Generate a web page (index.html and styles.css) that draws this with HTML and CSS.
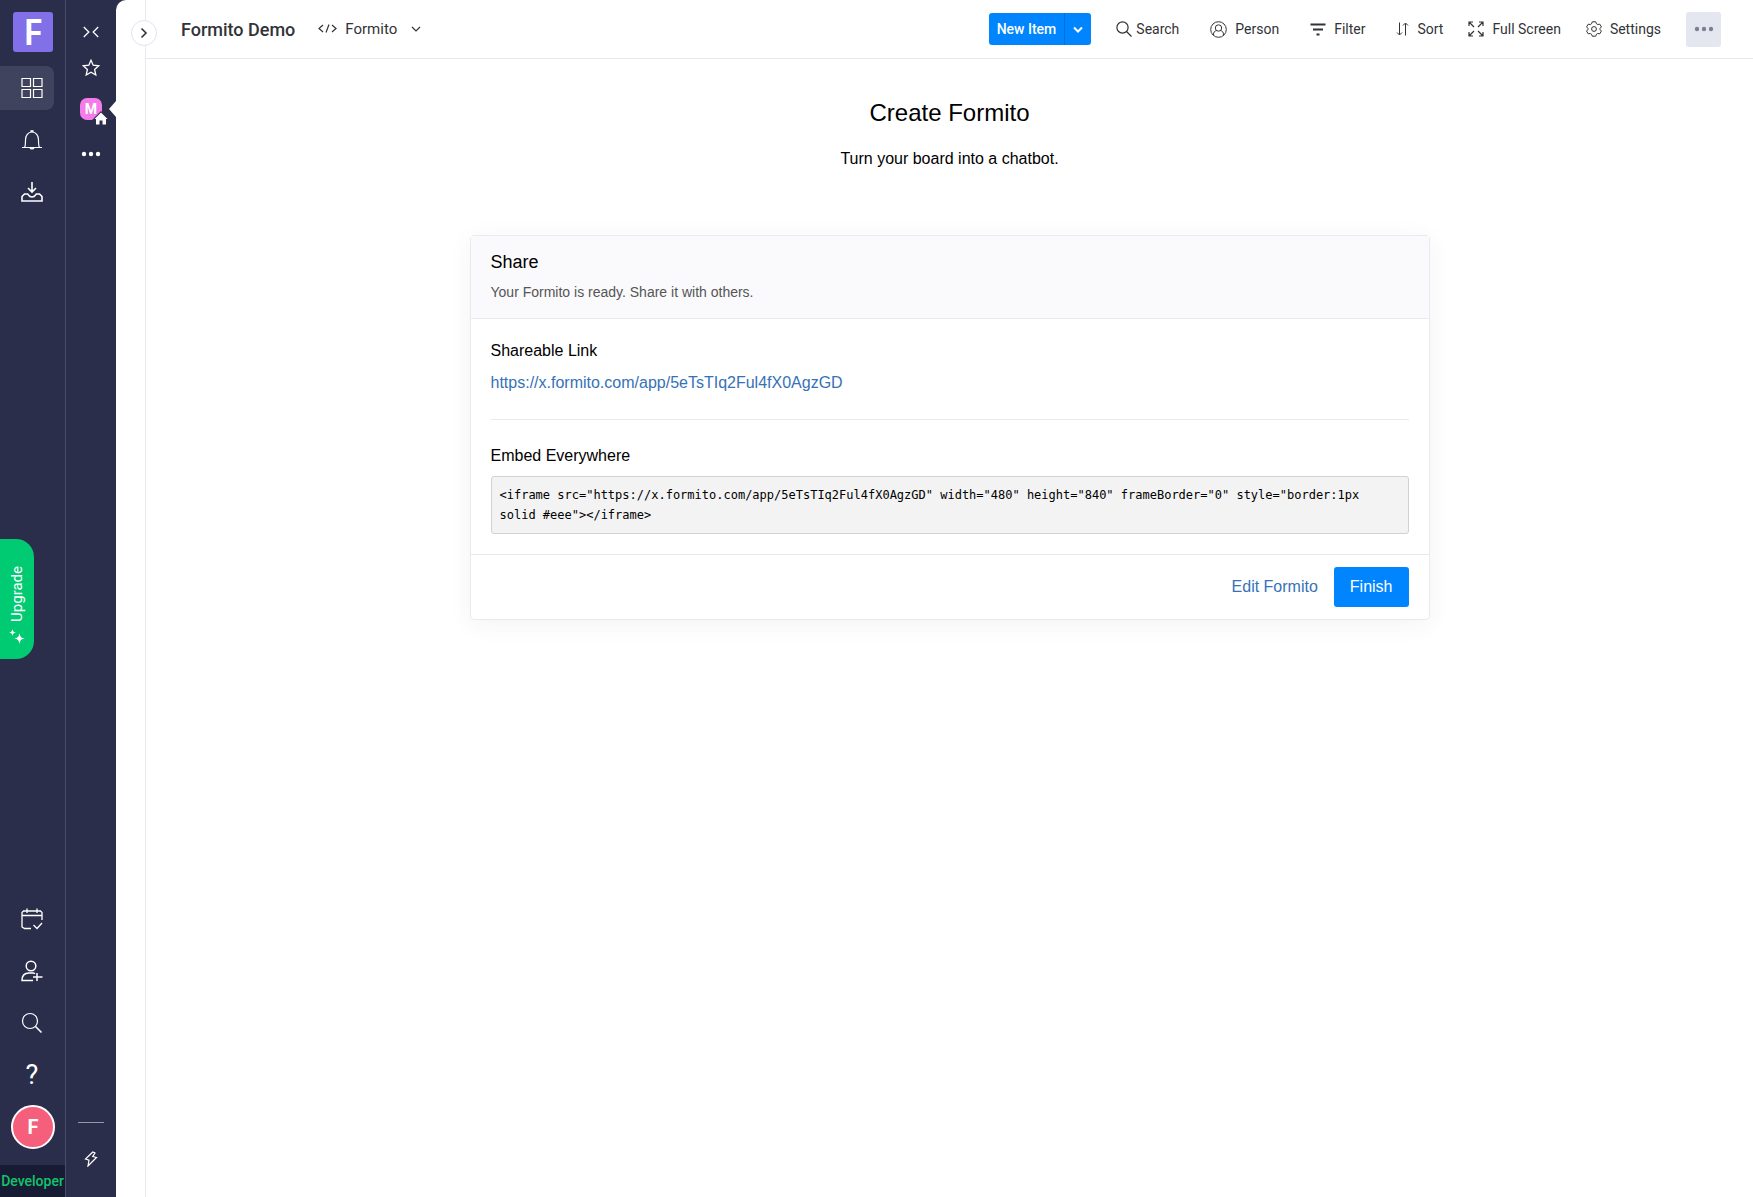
FILE: index.html
```html
<!DOCTYPE html>
<html lang="en">
<head>
    <meta charset="UTF-8">
    <meta name="viewport" content="width=device-width, initial-scale=1.0">
    <title>Formito Demo</title>
    <link rel="stylesheet" href="styles.css">
</head>
<body>

    <!-- Main navigation rail -->
    <nav class="rail">
        <a class="logo" href="#">F</a>
        <div class="rail-group">
            <button class="rail-btn active" aria-label="Workspaces">
                <svg width="22" height="20" viewBox="0 0 22 20"><path d="M1 .5h8.500v8H1zM12.500.5H21v8h-8.500zM1 11.500h8.500v8H1zM12.500 11.500H21v8h-8.500z"/></svg>
            </button>
            <button class="rail-btn" aria-label="Notifications">
                <svg width="22" height="20" viewBox="0 0 22 20"><path d="M1 17.500h20M3.500 17.500c1-1.500 1-3 1-7.500 0-4.500 2.500-8 6.500-8s6.500 3.500 6.500 8c0 4.500 0 6 1 7.500M10 2V.8h2V2M9 17.700c.5 1.600 3.500 1.600 4 0"/></svg>
            </button>
            <button class="rail-btn" aria-label="Inbox">
                <svg class="bold" width="22" height="20" viewBox="0 0 22 20"><path d="M11 0v9.500M7 6l4 4 4-4M6.500 12H3.500L1 14.500V19h20v-4.500L18.500 12h-3c-1 0-1 3-4.500 3s-3.500-3-4.500-3z"/></svg>
            </button>
        </div>

        <div class="rail-group rail-bottom">
            <button class="rail-btn" aria-label="My week">
                <svg width="22" height="22" viewBox="0 0 22 22"><path d="M10 20.500H3.500L1 19V4.500L2.500 3h17L21 4.500V12M1 7.500h20M6 .5V5M16 .5V5M12.500 17l3.500 3.500 5-5.500" stroke-width="1.300"/></svg>
            </button>
            <button class="rail-btn" aria-label="Invite members">
                <svg width="22" height="22" viewBox="0 0 22 22"><path d="M10 1.200a4.800 4.800 0 1 1 0 9.600 4.800 4.800 0 0 1 0-9.600zM12 20.500H1c0-5 2.500-7.500 7-7.500h4c1 0 1.500.3 2 .6M16 13v8M12 17h9.500" stroke-width="1.500"/></svg>
            </button>
            <button class="rail-btn" aria-label="Search everything">
                <svg width="22" height="22" viewBox="0 0 22 22"><circle cx="9" cy="9" r="7.500"/><path d="M14.500 14.500l6 6" stroke-width="1.600"/></svg>
            </button>
            <button class="rail-btn help" aria-label="Help">?</button>
            <button class="avatar" aria-label="Profile">F</button>
        </div>
        <a class="developer" href="#">Developer</a>
    </nav>

    <!-- Workspace rail -->
    <nav class="workspaces">
        <button class="ws-btn" aria-label="Collapse">
            <svg width="16" height="12" viewBox="0 0 16 12"><path d="M.8 1l5 5-5 5M15.200 1l-5 5 5 5" stroke-width="1.300"/></svg>
        </button>
        <button class="ws-btn" aria-label="Favorites">
            <svg width="18" height="18" viewBox="0 0 18 18"><path d="M9 1.200l2.200 5 5.600.6-4.200 3.700 1.200 5.500L9 13.300 4.200 16l1.200-5.500L1.200 6.800l5.600-.6z" stroke-width="1.300"/></svg>
        </button>
        <button class="ws-btn current" aria-label="Main workspace">
            <span class="ws-tile">M
                <svg class="home" width="14" height="13" viewBox="0 0 14 13"><path d="M7 .5L13.500 7H12v5.500H8.500v-4h-3v4H2V7H.5z"/></svg>
            </span>
        </button>
        <button class="ws-btn" aria-label="More workspaces">
            <svg class="solid" width="20" height="6" viewBox="0 0 20 6"><circle cx="3" cy="3" r="2.200"/><circle cx="10" cy="3" r="2.200"/><circle cx="17" cy="3" r="2.200"/></svg>
        </button>
        <div class="ws-footer">
            <hr>
            <button class="ws-btn" aria-label="Shortcuts">
                <svg width="14" height="16" viewBox="0 0 14 16"><path d="M8.800 1L1.500 8l3.500 1.200L4 15l8.500-8.500-3.800-1L11 2z" stroke-width="1.200"/></svg>
            </button>
        </div>
    </nav>

    <button class="upgrade">
        <svg width="18" height="16" viewBox="0 0 18 16"><path d="M11.500 4c.7 4 1.500 4.800 5.500 5.500-4 .7-4.800 1.500-5.500 5.500-.7-4-1.500-4.800-5.500-5.500 4-.7 4.800-1.500 5.500-5.500zM4.500 0c.4 2.600 1 3.200 3.500 3.500C5.500 4 4.900 4.500 4.500 7 4.100 4.500 3.500 4 1 3.500 3.500 3.200 4.100 2.600 4.500 0z"/></svg>
        <span>Upgrade</span>
    </button>

    <div class="page">
        <aside class="drawer">
            <button class="drawer-toggle" aria-label="Open navigation">
                <svg width="8" height="12" viewBox="0 0 8 12"><path d="M1.500 1.500L6 6l-4.500 4.500"/></svg>
            </button>
        </aside>

        <main class="board">
            <header class="topbar">
                <h1>Formito Demo</h1>
                <button class="view">
                    <svg width="19" height="12" viewBox="0 0 19 12"><path d="M5 2L1 5.500 5 9M14 2l4 3.500L14 9M11 1.500L8 9.500"/></svg>
                    Formito
                    <svg class="chevron" width="10" height="6" viewBox="0 0 10 6"><path d="M1 1l4 4 4-4"/></svg>
                </button>

                <div class="tools">
                    <div class="new-item">
                        <button>New Item</button>
                        <button class="new-item-menu" aria-label="New item options">
                            <svg width="10" height="7" viewBox="0 0 10 7"><path d="M1 1.500l4 4 4-4"/></svg>
                        </button>
                    </div>
                    <button class="tool search">
                        <svg width="16" height="16" viewBox="0 0 16 16"><circle cx="6.500" cy="6.500" r="5.600"/><path d="M10.500 10.500l5 5"/></svg>
                        Search
                    </button>
                    <button class="tool spaced">
                        <svg class="thin" width="17" height="17" viewBox="0 0 17 17"><circle cx="8.500" cy="8.500" r="7.800"/><circle cx="8.500" cy="7" r="3.200"/><path d="M3.500 14c0-3 1-4 3.200-4.500M13.500 14c0-3-1-4-3.200-4.500"/></svg>
                        Person
                    </button>
                    <button class="tool spaced">
                        <svg class="thick" width="16" height="14" viewBox="0 0 16 14"><path d="M.5 2.500h15M3 7.500h10M6.500 12.500h3"/></svg>
                        Filter
                    </button>
                    <button class="tool spaced">
                        <svg width="13" height="14" viewBox="0 0 13 14"><path d="M3.500.5v12M1 10.500l2.500 2.500L6 10.500M9.500 13.500v-12M7 3.500L9.500 1 12 3.500" stroke-width="1"/></svg>
                        Sort
                    </button>
                    <button class="tool">
                        <svg width="16" height="16" viewBox="0 0 16 16"><path d="M1 5V1h4M1 1l5 5M11 1h4v4M15 1l-5 5M1 11v4h4M1 15l5-5M15 11v4h-4M15 15l-5-5"/></svg>
                        Full Screen
                    </button>
                    <button class="tool">
                        <svg class="thin" width="16" height="16" viewBox="0 0 16 16"><path d="M5.500 2.800L6.300.8h3.400l.8 2 1.200.7 2.100-.3 1.600 2.700L14 7.500v1l1.400 1.600-1.600 2.700-2.100-.3-1.200.7-.8 2H6.300l-.8-2-1.200-.7-2.100.3L.6 10.100 2 8.500v-1L.6 5.900l1.600-2.700 2.100.3z" stroke-linejoin="round"/><circle cx="8" cy="8" r="2.400"/></svg>
                        Settings
                    </button>
                    <button class="more" aria-label="More options">
                        <svg width="20" height="6" viewBox="0 0 20 6"><circle cx="3" cy="3" r="2.200"/><circle cx="10" cy="3" r="2.200"/><circle cx="17" cy="3" r="2.200"/></svg>
                    </button>
                </div>
            </header>

            <section class="content">
                <h2>Create Formito</h2>
                <p class="intro">Turn your board into a chatbot.</p>

                <div class="card">
                    <div class="card-header">
                        <h3>Share</h3>
                        <p>Your Formito is ready. Share it with others.</p>
                    </div>
                    <div class="card-body">
                        <h4>Shareable Link</h4>
                        <a href="https://x.formito.com/app/5eTsTIq2Ful4fX0AgzGD">https://x.formito.com/app/5eTsTIq2Ful4fX0AgzGD</a>
                        <hr>
                        <h4>Embed Everywhere</h4>
                        <pre>&lt;iframe src="https://x.formito.com/app/5eTsTIq2Ful4fX0AgzGD" width="480" height="840" frameBorder="0" style="border:1px solid #eee"&gt;&lt;/iframe&gt;</pre>
                    </div>
                    <div class="card-footer">
                        <a href="#">Edit Formito</a>
                        <button class="finish">Finish</button>
                    </div>
                </div>
            </section>
        </main>
    </div>

</body>
</html>
```

FILE: styles.css
```css
* {
    box-sizing: border-box;
}
body {
    margin: 0;
    display: flex;
    min-height: 100vh;
    background-color: #2b2e4b;
    color: #000;
    font-family: "Liberation Sans", Arial, sans-serif;
    font-size: 16px;
}
button {
    margin: 0;
    padding: 0;
    border: none;
    background: none;
    color: inherit;
    font-family: Roboto, sans-serif;
    cursor: pointer;
}
a {
    color: #3572b8;
    text-decoration: none;
}
h1, h2, h3, h4, p {
    margin: 0;
    font-weight: normal;
}
svg {
    display: block;
    flex-shrink: 0;
    fill: none;
    stroke: currentColor;
    stroke-width: 1.2;
}

/* Navigation rail */
.rail {
    display: flex;
    flex-direction: column;
    width: 66px;
    flex-shrink: 0;
    padding-top: 12px;
    border-right: 1px solid #4a4d68;
    color: #fff;
}
.logo {
    display: flex;
    justify-content: center;
    align-items: center;
    width: 40px;
    height: 40px;
    margin: 0 0 14px 13px;
    border-radius: 3px;
    background-color: #8270e8;
    color: #fff;
    font-family: "Noto Sans", sans-serif;
    font-size: 36px;
    font-weight: 600;
    line-height: 40px;
}
.rail-group {
    display: flex;
    flex-direction: column;
    gap: 8px;
}
.rail-btn {
    display: flex;
    justify-content: center;
    align-items: center;
    width: 54px;
    height: 44px;
    padding-left: 10px;
    border-radius: 0 8px 8px 0;
}
.rail-btn.active {
    background-color: #40435d;
}
.rail-btn .bold {
    stroke-width: 1.6;
}
.rail-bottom {
    margin-top: auto;
    margin-bottom: 16px;
}
.help {
    font-size: 27px;
}
.avatar {
    width: 44px;
    height: 44px;
    margin-left: 11px;
    border: 2px solid #fff;
    border-radius: 50%;
    background-color: #f65f7c;
    font-size: 20px;
    font-weight: bold;
}
.developer {
    background-color: #181b34;
    color: #12c46c;
    font-family: Roboto, sans-serif;
    font-size: 14px;
    font-weight: 500;
    line-height: 32px;
    text-align: center;
}

/* Workspace rail */
.workspaces {
    display: flex;
    flex-direction: column;
    width: 50px;
    flex-shrink: 0;
    padding-top: 14px;
    color: #fff;
}
.ws-btn {
    display: flex;
    justify-content: center;
    align-items: center;
    width: 100%;
    height: 36px;
}
.current {
    position: relative;
    height: 46px;
}
.current::after {
    content: "";
    position: absolute;
    right: 0;
    border: 8px solid transparent;
    border-left: none;
    border-right: 7px solid #fff;
}
.ws-tile {
    position: relative;
    width: 22px;
    height: 22px;
    border-radius: 7px;
    background-color: #f57bea;
    font-size: 14px;
    font-weight: bold;
    line-height: 22px;
}
.home {
    position: absolute;
    right: -6px;
    bottom: -5px;
    fill: #fff;
    stroke: #2b2e4b;
    stroke-width: 2;
    paint-order: stroke;
    overflow: visible;
}
.solid {
    fill: currentColor;
    stroke: none;
}
.current + .ws-btn {
    height: 44px;
}
.ws-footer {
    margin-top: auto;
    padding-bottom: 20px;
}
.ws-footer hr {
    width: 26px;
    height: 1px;
    margin: 0 auto 18px;
    border: none;
    background-color: #9698a8;
}

.upgrade {
    position: fixed;
    left: 0;
    top: 50%;
    display: flex;
    flex-direction: column-reverse;
    justify-content: center;
    align-items: center;
    gap: 8px;
    width: 34px;
    height: 120px;
    padding-top: 14px;
    border-radius: 0 18px 18px 0;
    background-color: #00ca72;
    color: #fff;
    font-size: 15px;
    transform: translateY(-50%);
}
.upgrade span {
    writing-mode: vertical-rl;
    transform: rotate(180deg);
}
.upgrade svg {
    fill: #fff;
    stroke: none;
}

/* Page */
.page {
    display: flex;
    flex: 1;
    min-width: 0;
    border-top-left-radius: 10px;
    background-color: #fff;
}
.drawer {
    position: relative;
    width: 30px;
    flex-shrink: 0;
    border-right: 1px solid #e6e9ef;
}
.drawer-toggle {
    position: absolute;
    top: 20px;
    right: -12px;
    display: flex;
    justify-content: center;
    align-items: center;
    width: 26px;
    height: 26px;
    border: 1px solid #e0e3ec;
    border-radius: 50%;
    background-color: #fff;
    color: #323338;
}
.drawer-toggle svg {
    stroke-width: 1.6;
}
.board {
    flex: 1;
    min-width: 0;
}
.topbar {
    display: flex;
    align-items: center;
    height: 59px;
    padding: 0 32px 0 35px;
    border-bottom: 1px solid #e6e9ef;
    color: #323338;
    font-family: Roboto, sans-serif;
    white-space: nowrap;
}
.topbar h1 {
    font-size: 18px;
    font-weight: 500;
}
.view {
    display: flex;
    align-items: center;
    gap: 8px;
    margin-left: 23px;
    font-size: 15px;
}
.chevron {
    margin-left: 6px;
}
.tools {
    display: flex;
    align-items: center;
    gap: 25px;
    margin-left: auto;
}
.new-item {
    display: flex;
    height: 32px;
    border-radius: 3px;
    background-color: #0085ff;
    color: #fff;
}
.new-item button {
    padding: 0 8px;
    font-size: 14px;
    font-weight: 500;
}
.new-item .new-item-menu {
    border-left: 1px solid #0071d9;
}
.new-item svg {
    stroke-width: 2;
}
.tool {
    display: flex;
    align-items: center;
    gap: 8px;
    font-size: 14px;
}
.search {
    gap: 4px;
}
.spaced {
    padding-left: 6px;
}
.thin {
    stroke-width: 1;
}
.thick {
    stroke-width: 2;
}
.more {
    display: flex;
    justify-content: center;
    align-items: center;
    width: 35px;
    height: 35px;
    border-radius: 3px;
    background-color: #e4e7ef;
    color: #7c8092;
}
.more svg {
    fill: currentColor;
    stroke: none;
}

/* Share card */
.content {
    padding: 40px 24px;
    text-align: center;
}
.content h2 {
    font-size: 24px;
    line-height: 28px;
}
.intro {
    margin-top: 20px;
    line-height: 24px;
}
.card {
    max-width: 960px;
    margin: 64px auto 0;
    border: 1px solid #e9eaee;
    border-radius: 4px;
    box-shadow: 0 4px 24px rgba(50, 50, 93, 0.06);
    text-align: left;
}
.card-header {
    padding: 14px 20px 16px;
    border-bottom: 1px solid #e9eaee;
    background-color: #fafafc;
}
.card-header h3 {
    font-size: 18px;
    line-height: 24px;
}
.card-header p {
    margin-top: 8px;
    color: #555;
    font-size: 14px;
    line-height: 20px;
}
.card-body {
    padding: 20px;
}
.card-body h4 {
    margin-bottom: 8px;
    font-size: 16px;
    line-height: 24px;
}
.card-body a {
    display: block;
    line-height: 24px;
}
.card-body hr {
    height: 1px;
    margin: 24px 0;
    border: none;
    background-color: #e9eaee;
}
.card-body pre {
    margin: 0;
    padding: 8px;
    border: 1px solid #d2d2d2;
    border-radius: 3px;
    background-color: #f3f3f3;
    font-family: "DejaVu Sans Mono", monospace;
    font-size: 12px;
    line-height: 20px;
    white-space: pre-wrap;
}
.card-footer {
    display: flex;
    justify-content: flex-end;
    align-items: center;
    gap: 16px;
    padding: 12px 20px;
    border-top: 1px solid #e9eaee;
}
.finish {
    height: 40px;
    padding: 0 16px;
    border-radius: 3px;
    background-color: #0085ff;
    color: #fff;
    font-family: inherit;
    font-size: 16px;
}
```
